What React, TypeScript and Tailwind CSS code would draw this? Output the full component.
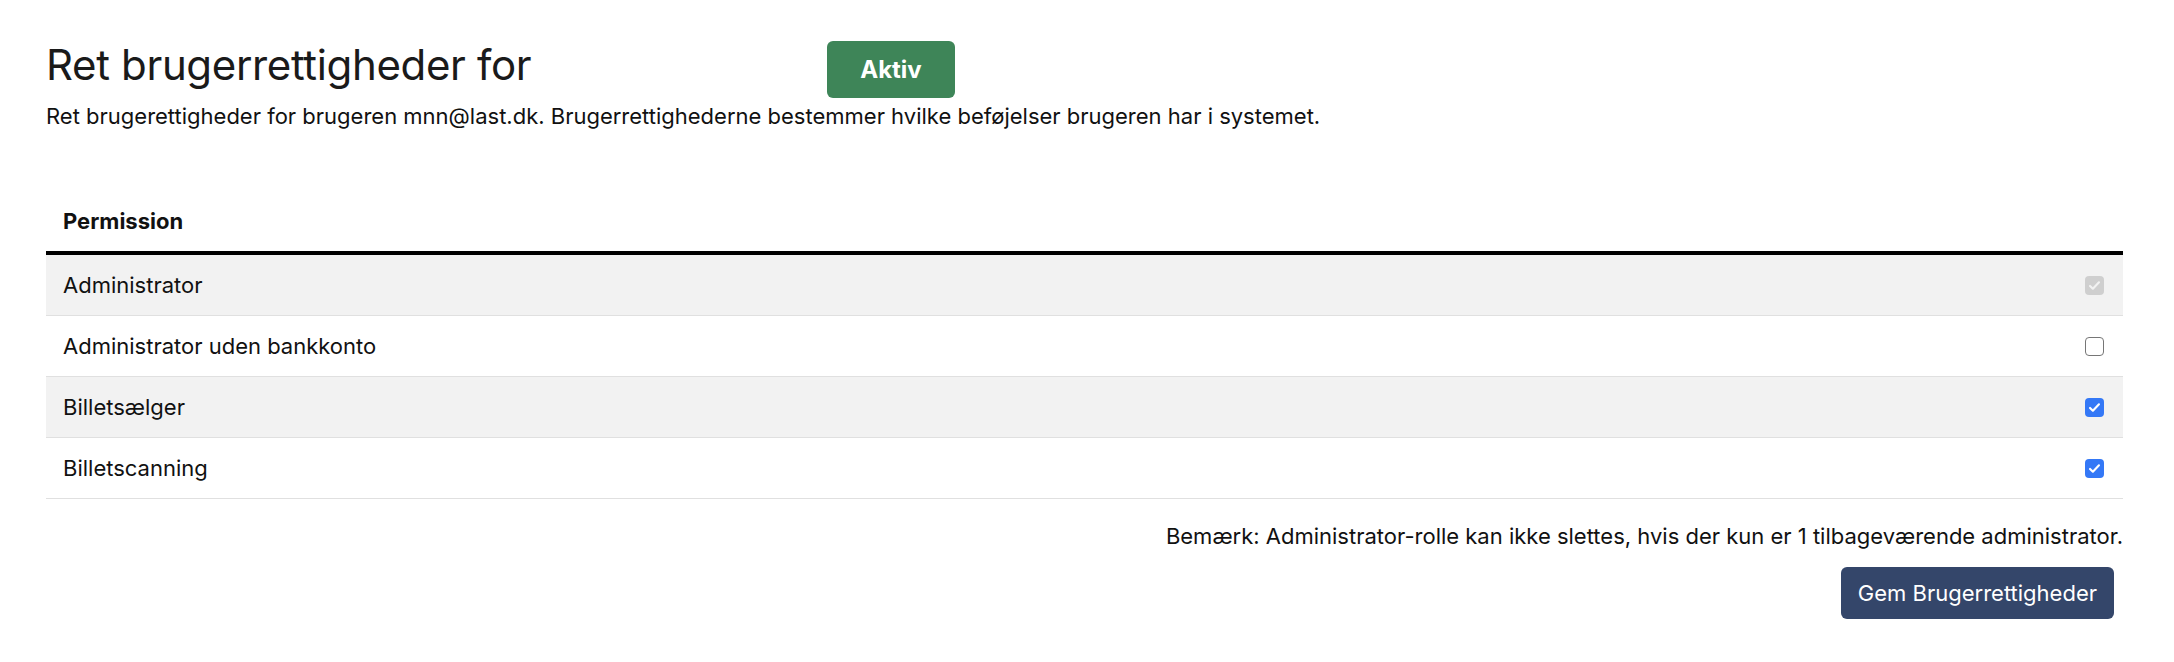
import React from "react";

type Perm = { name: string; state: "disabled" | "off" | "on" };

const perms: Perm[] = [
  { name: "Administrator", state: "disabled" },
  { name: "Administrator uden bankkonto", state: "off" },
  { name: "Billetsælger", state: "on" },
  { name: "Billetscanning", state: "on" },
];

function Check({ state }: { state: Perm["state"] }) {
  if (state === "off") {
    return <div className="h-[19px] w-[19px] rounded-[4px] border-[1.5px] border-[#767676] bg-white" />;
  }
  const bg = state === "on" ? "bg-[#3478f6]" : "bg-[#cfcfcf]";
  return (
    <div className={`flex h-[19px] w-[19px] items-center justify-center rounded-[4px] ${bg}`}>
      <svg width="13" height="13" viewBox="0 0 16 16" fill="none">
        <path
          d="M2.5 8.5l3.5 3.5 7.5-8"
          stroke={state === "on" ? "#ffffff" : "#f2f2f2"}
          strokeWidth="2.6"
          strokeLinecap="round"
          strokeLinejoin="round"
        />
      </svg>
    </div>
  );
}

export default function App() {
  return (
    <div className="min-h-screen bg-white pl-[46px] pr-[51px] pt-[41px] font-['Inter',sans-serif] text-[#111]">
      {/* Header */}
      <div className="flex items-start">
        <h1 className="mt-[3px] w-[781px] text-[42px] font-normal leading-none tracking-[-0.35px] text-[#1a1a1a]">
          Ret brugerrettigheder for
        </h1>
        <span className="flex h-[57px] w-[128px] items-center justify-center rounded-[6px] bg-[#3e8558] text-[24px] font-bold text-white">
          Aktiv
        </span>
      </div>
      <p className="mt-[4px] text-[22px] leading-[28px]">
        Ret brugerettigheder for brugeren mnn@last.dk. Brugerrettighederne bestemmer hvilke beføjelser brugeren har i
        systemet.
      </p>

      {/* Table */}
      <div className="mt-[67px]">
        <div className="border-b-4 border-black pb-[16px] pl-[17px] pt-[10px] text-[22px] font-bold leading-[28px]">
          Permission
        </div>
        {perms.map((p, i) => (
          <div
            key={p.name}
            className={`flex h-[61px] items-center justify-between border-b border-[#e0e0e0] pl-[17px] pr-[19px] text-[22px] ${
              i % 2 === 0 ? "bg-[#f2f2f2]" : "bg-white"
            }`}
          >
            <span>{p.name}</span>
            <Check state={p.state} />
          </div>
        ))}
      </div>

      {/* Footer */}
      <div className="mt-[23px] flex flex-col items-end">
        <p className="text-[22px] leading-[28px]">
          Bemærk: Administrator-rolle kan ikke slettes, hvis der kun er 1 tilbageværende administrator.
        </p>
        <button className="mr-[9px] mt-[17px] h-[52px] rounded-[6px] bg-[#34466a] px-[17px] text-[22px] text-white">
          Gem Brugerrettigheder
        </button>
      </div>
    </div>
  );
}
